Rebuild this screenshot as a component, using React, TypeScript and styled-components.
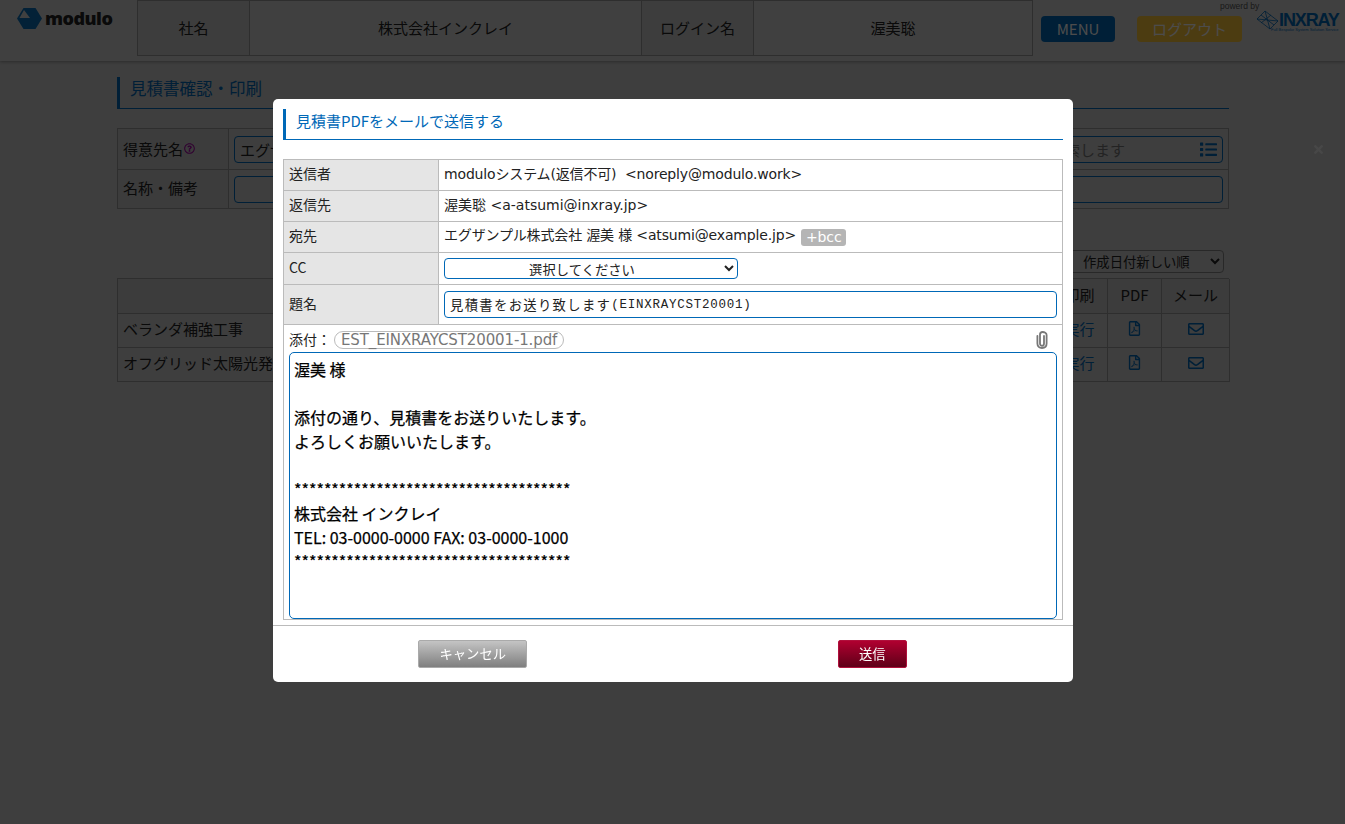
import React from 'react';
import styled, { createGlobalStyle } from 'styled-components';
import { FaRegEnvelope, FaRegFilePdf, FaRegQuestionCircle, FaList, FaTimes } from 'react-icons/fa';

const BLUE = '#0068b7';
const PAGE = '#cfcfcf';
const LINE = '#999';
const FONT = '"DejaVu Sans", "Noto Sans CJK JP", sans-serif';
const JP = '"Noto Sans CJK JP", sans-serif';

const GlobalStyle = createGlobalStyle`
  html, body {
    margin: 0;
    padding: 0;
    height: 100%;
    background: ${PAGE};
    font-family: ${JP};
    color: #222;
    overflow: hidden;
  }
  * { box-sizing: border-box; }
`;

const Header = styled.header`
  display: flex;
  align-items: flex-start;
  height: 61px;
  background: #d8d8d8;
  box-shadow: 0 1px 3px rgba(0, 0, 0, 0.3);
`;

const LogoBox = styled.div`
  width: 137px;
  flex-shrink: 0;
  display: flex;
  align-items: center;
  gap: 3px;
  padding: 7px 0 0 17px;
`;

const LogoText = styled.span`
  font-family: "Open Sans", sans-serif;
  font-weight: 800;
  font-size: 18px;
  line-height: 22px;
  letter-spacing: -0.5px;
  color: #222;
`;

const InfoTable = styled.div`
  display: grid;
  grid-template-columns: 112px 392px 112px 1fr;
  width: 896px;
  height: 56px;
  border: 1px solid ${LINE};
`;

const InfoCell = styled.div<{ $label?: boolean }>`
  display: flex;
  align-items: center;
  justify-content: center;
  padding-bottom: 1px;
  font-size: 15px;
  background: ${p => (p.$label ? '#cccccc' : '#d8d8d8')};
  border-right: 1px solid ${LINE};
  &:last-child { border-right: 0; }
`;

const HeaderButton = styled.div<{ $bg: string; $w: number; $ml: number }>`
  display: flex;
  align-items: center;
  justify-content: center;
  width: ${p => p.$w}px;
  height: 26px;
  margin: 16px 0 0 ${p => p.$ml}px;
  padding-bottom: 1px;
  border-radius: 4px;
  background: ${p => p.$bg};
  color: #fff;
  font-size: 15px;
  flex-shrink: 0;
`;

const BrandBox = styled.div`
  position: relative;
  flex: 1;
  height: 40px;
  margin-left: 14px;
`;

const PoweredBy = styled.span`
  position: absolute;
  left: -36px;
  top: 1px;
  font-family: "Liberation Sans", sans-serif;
  font-size: 8.5px;
  line-height: 11px;
  color: #555;
`;

const BrandRow = styled.div`
  display: flex;
  align-items: center;
  padding-top: 10px;
`;

const BrandName = styled.span`
  font-family: "Liberation Sans", sans-serif;
  font-weight: 700;
  font-size: 18px;
  line-height: 15px;
  letter-spacing: -1.1px;
  white-space: nowrap;
  color: ${BLUE};
`;

const BrandSub = styled.span`
  position: absolute;
  left: 15px;
  top: 27px;
  font-family: "Liberation Sans", sans-serif;
  font-size: 4px;
  line-height: 5px;
  white-space: nowrap;
  color: ${BLUE};
`;

const Main = styled.main`
  width: 1112px;
  margin: 16px 0 0 117px;
`;

const PageTitle = styled.h2`
  margin: 0;
  height: 32px;
  padding-left: 10px;
  border-left: 3px solid ${BLUE};
  border-bottom: 1px solid ${BLUE};
  font-size: 16.5px;
  font-weight: 400;
  line-height: 23px;
  color: ${BLUE};
`;

const FormTable = styled.div`
  display: grid;
  grid-template-columns: 111px 1fr;
  grid-template-rows: 40px 39px;
  margin-top: 19px;
  border: 1px solid ${LINE};
`;

const FormLabel = styled.div`
  display: flex;
  align-items: center;
  gap: 1px;
  padding: 0 0 2px 5px;
  background: #c8c8c8;
  font-size: 15px;
  border-right: 1px solid ${LINE};
  &:nth-of-type(n + 3) {
    padding-bottom: 4px;
    border-top: 1px solid ${LINE};
  }
`;

const FormField = styled.div`
  display: flex;
  align-items: center;
  padding: 0 5px;
  &:nth-of-type(n + 3) { border-top: 1px solid ${LINE}; }
`;

const FakeInput = styled.div`
  flex: 1;
  display: flex;
  align-items: center;
  justify-content: space-between;
  height: 27px;
  padding: 0 5px;
  border: 1px solid ${BLUE};
  border-radius: 4px;
  font-size: 15px;
`;

const InputEnd = styled.span`
  display: flex;
  align-items: center;
  gap: 75px;
  color: #777;
  font-size: 15px;
`;

const CloseMark = styled.span`
  position: absolute;
  left: 1312px;
  top: 143px;
  color: #eee;
  font-size: 13px;
  line-height: 13px;
`;

const SortRow = styled.div`
  display: flex;
  justify-content: flex-end;
  margin-top: 41px;
  padding-right: 5px;
`;

const SortSelect = styled.select`
  width: 170px;
  height: 23px;
  padding-left: 24px;
  border: 1px solid #888;
  border-radius: 4px;
  background: ${PAGE};
  font-family: ${JP};
  font-size: 13.33px;
  color: #222;
`;

const ListTable = styled.div`
  display: grid;
  grid-template-columns: 934px 56px 54px 68px;
  grid-template-rows: 35px 34px 34px;
  margin-top: 5px;
  border-left: 1px solid ${LINE};
  border-top: 1px solid ${LINE};
`;

const ListCell = styled.div<{ $head?: boolean; $left?: boolean }>`
  display: flex;
  align-items: center;
  justify-content: ${p => (p.$left ? 'flex-start' : 'center')};
  padding: 0 0 4px ${p => (p.$left ? '5px' : '0')};
  border-right: 1px solid ${LINE};
  border-bottom: 1px solid ${LINE};
  background: ${p => (p.$head ? '#c8c8c8' : PAGE)};
  font-size: 15px;
`;

const LinkText = styled.span`
  color: ${BLUE};
`;

const Overlay = styled.div`
  position: fixed;
  inset: 0;
  background: rgba(0, 0, 0, 0.7);
`;

const Modal = styled.div`
  width: 800px;
  height: 583px;
  margin: 99px 0 0 273px;
  display: flex;
  flex-direction: column;
  background: #fff;
  border-radius: 5px;
  overflow: hidden;
`;

const ModalBody = styled.div`
  height: 526px;
  padding: 10px 10px 0;
  overflow: hidden;
`;

const ModalTitle = styled.h3`
  margin: 0 0 19px;
  height: 31px;
  padding-left: 10px;
  border-left: 3px solid ${BLUE};
  border-bottom: 1px solid ${BLUE};
  font-size: 15px;
  font-weight: 400;
  line-height: 24px;
  color: ${BLUE};
`;

const MailTable = styled.table`
  width: 780px;
  border-collapse: collapse;
  table-layout: fixed;
  font-size: 14px;
`;

const Row = styled.tr<{ $h: number }>`
  height: ${p => p.$h}px;
`;

const Th = styled.th`
  width: 155px;
  padding: 0 5px 4px;
  border: 1px solid #bbb;
  background: #e5e5e5;
  font-weight: 400;
  text-align: left;
`;

const Td = styled.td<{ $tight?: boolean }>`
  padding: 0 5px 5px;
  border: 1px solid #bbb;
  font-family: ${FONT};
  letter-spacing: ${p => (p.$tight ? '-0.16px' : '0')};
  white-space: pre;
`;

const ControlTd = styled.td`
  padding: 0 5px;
  border: 1px solid #bbb;
`;

const Bcc = styled.span`
  display: inline-block;
  height: 17px;
  margin-left: 5px;
  padding: 0 5px;
  border-radius: 3px;
  background: #b5b5b5;
  color: #fff;
  font-size: 14px;
  line-height: 17px;
  vertical-align: -2px;
`;

const CcSelect = styled.select`
  display: block;
  width: 294px;
  height: 21px;
  padding: 0 6px 2px 0;
  border: 1px solid ${BLUE};
  border-radius: 4px;
  background: #fff;
  font-family: ${JP};
  font-size: 13.33px;
  text-align: center;
  color: #222;
`;

const SubjectBox = styled.div`
  display: flex;
  align-items: center;
  height: 27px;
  padding: 0 5px;
  border: 1px solid ${BLUE};
  border-radius: 4px;
  font-family: ${JP};
  font-size: 13.33px;
  letter-spacing: 1.33px;
`;

const SubjectMono = styled.span`
  font-family: "Liberation Mono", monospace;
  font-size: 12.5px;
  letter-spacing: 0.75px;
`;

const AttachRow = styled.div`
  display: flex;
  align-items: center;
  height: 27px;
  padding-top: 2px;
`;

const AttachLabel = styled.span`
  width: 45px;
  padding-bottom: 2px;
  font-size: 14px;
`;

const FilePill = styled.span`
  height: 18px;
  padding: 0 6px;
  border: 1px solid #bbb;
  border-radius: 9px;
  font-family: "DejaVu Sans", sans-serif;
  font-size: 15px;
  line-height: 16px;
  letter-spacing: -0.12px;
  white-space: nowrap;
  color: #777;
`;

const ClipIcon = styled.svg`
  margin-left: auto;
  margin-right: 9px;
`;

const BodyArea = styled.textarea`
  display: block;
  width: 768px;
  height: 267px;
  padding: 4px;
  border: 1px solid ${BLUE};
  border-radius: 5px;
  outline: 0;
  resize: none;
  overflow: hidden;
  font-family: ${JP};
  font-size: 16px;
  line-height: 24px;
  -webkit-text-stroke: 0.25px #000;
  color: #000;
`;

const ModalFooter = styled.footer`
  display: grid;
  grid-template-columns: 1fr 1fr;
  justify-items: center;
  height: 57px;
  padding: 14px 1px 0 0;
  border-top: 1px solid #bbb;
`;

const ActionButton = styled.button<{ $kind: 'gray' | 'red'; $w: number }>`
  width: ${p => p.$w}px;
  height: 28px;
  padding: 0 0 2px;
  border: 1px solid ${p => (p.$kind === 'gray' ? '#aaa' : '#b0103c')};
  border-radius: 2px;
  background: ${p =>
    p.$kind === 'gray'
      ? 'linear-gradient(#c4c4c4, #7f7f7f)'
      : 'linear-gradient(#b00030, #5f0018)'};
  color: #fff;
  font-family: ${JP};
  font-size: 13.33px;
`;

const bodyText = `渥美 様

添付の通り、見積書をお送りいたします。
よろしくお願いいたします。

*************************************
株式会社 インクレイ
TEL: 03-0000-0000 FAX: 03-0000-1000
*************************************`;

const ModuloLogo = () => (
  <svg width="25" height="21" viewBox="0 0 25 21">
    <path d="M6.5 0H18.5L25 10.5L18.5 21H6.5L0 10.5Z" fill="#0d70b8" />
    <path d="M7 2L2.5 10H13Z" fill="#d8d8d8" />
  </svg>
);

const BrandMark = () => (
  <svg width="23" height="20" viewBox="0 0 23 20" fill="none" stroke={BLUE} strokeWidth="0.8">
    <path d="M1 9L9 1L22 11L14 19Z" />
    <path d="M1 9L22 11M9 1L14 19M5 5L18 15M5 13L15 5" />
  </svg>
);

const Clip = () => (
  <ClipIcon width="12" height="18" viewBox="0 0 12 18" fill="none" stroke="#777" strokeWidth="1.8" strokeLinecap="round">
    <path d="M8 5V12.5C8 14 7.2 14.8 6 14.8C4.8 14.8 4 14 4 12.5V3.5C4 2 4.8 1 6.6 1C8.4 1 10.6 2 10.6 4V12.5C10.6 15.4 8.6 17 6 17C3.4 17 1.4 15.4 1.4 12.5V5" />
  </ClipIcon>
);

const rows = ['ベランダ補強工事', 'オフグリッド太陽光発電工事'];

const App: React.FC = () => (
  <>
    <GlobalStyle />
    <Header>
      <LogoBox>
        <ModuloLogo />
        <LogoText>modulo</LogoText>
      </LogoBox>
      <InfoTable>
        <InfoCell $label>社名</InfoCell>
        <InfoCell>株式会社インクレイ</InfoCell>
        <InfoCell $label>ログイン名</InfoCell>
        <InfoCell>渥美聡</InfoCell>
      </InfoTable>
      <HeaderButton $bg={BLUE} $w={74} $ml={8}>MENU</HeaderButton>
      <HeaderButton $bg="#ffc83a" $w={105} $ml={22}>ログアウト</HeaderButton>
      <BrandBox>
        <PoweredBy>powerd by</PoweredBy>
        <BrandRow>
          <BrandMark />
          <BrandName>INXRAY</BrandName>
        </BrandRow>
        <BrandSub>Full Bespoke System Solution Service</BrandSub>
      </BrandBox>
    </Header>
    <Main>
      <PageTitle>見積書確認・印刷</PageTitle>
      <FormTable>
        <FormLabel>
          得意先名
          <FaRegQuestionCircle size={11} color="#a000a0" />
        </FormLabel>
        <FormField>
          <FakeInput>
            <span>エグザンプル株式会社</span>
            <InputEnd>
              名称で検索します
              <FaList size={17} color={BLUE} />
            </InputEnd>
          </FakeInput>
        </FormField>
        <FormLabel>名称・備考</FormLabel>
        <FormField>
          <FakeInput />
        </FormField>
      </FormTable>
      <CloseMark><FaTimes /></CloseMark>
      <SortRow>
        <SortSelect defaultValue="new">
          <option value="new">作成日付新しい順</option>
        </SortSelect>
      </SortRow>
      <ListTable>
        <ListCell $head />
        <ListCell $head>印刷</ListCell>
        <ListCell $head>PDF</ListCell>
        <ListCell $head>メール</ListCell>
        {rows.map(name => (
          <React.Fragment key={name}>
            <ListCell $left>{name}</ListCell>
            <ListCell><LinkText>実行</LinkText></ListCell>
            <ListCell><FaRegFilePdf size={15} color={BLUE} /></ListCell>
            <ListCell><FaRegEnvelope size={16} color={BLUE} /></ListCell>
          </React.Fragment>
        ))}
      </ListTable>
    </Main>
    <Overlay>
      <Modal>
        <ModalBody>
          <ModalTitle>見積書PDFをメールで送信する</ModalTitle>
          <MailTable>
            <tbody>
              <Row $h={31}>
                <Th>送信者</Th>
                <Td $tight>{'moduloシステム(返信不可)  <noreply@modulo.work>'}</Td>
              </Row>
              <Row $h={31}>
                <Th>返信先</Th>
                <Td>{'渥美聡 <a-atsumi@inxray.jp>'}</Td>
              </Row>
              <Row $h={31}>
                <Th>宛先</Th>
                <Td $tight>
                  {'エグザンプル株式会社 渥美 様 <atsumi@example.jp>'}
                  <Bcc>+bcc</Bcc>
                </Td>
              </Row>
              <Row $h={32}>
                <Th>CC</Th>
                <ControlTd>
                  <CcSelect defaultValue="">
                    <option value="">選択してください</option>
                  </CcSelect>
                </ControlTd>
              </Row>
              <Row $h={40}>
                <Th>題名</Th>
                <ControlTd>
                  <SubjectBox>
                    見積書をお送り致します
                    <SubjectMono>(EINXRAYCST20001)</SubjectMono>
                  </SubjectBox>
                </ControlTd>
              </Row>
              <tr>
                <ControlTd colSpan={2}>
                  <AttachRow>
                    <AttachLabel>添付：</AttachLabel>
                    <FilePill>EST_EINXRAYCST20001-1.pdf</FilePill>
                    <Clip />
                  </AttachRow>
                  <BodyArea readOnly defaultValue={bodyText} />
                </ControlTd>
              </tr>
            </tbody>
          </MailTable>
        </ModalBody>
        <ModalFooter>
          <ActionButton $kind="gray" $w={109}>キャンセル</ActionButton>
          <ActionButton $kind="red" $w={69}>送信</ActionButton>
        </ModalFooter>
      </Modal>
    </Overlay>
  </>
);

export default App;
